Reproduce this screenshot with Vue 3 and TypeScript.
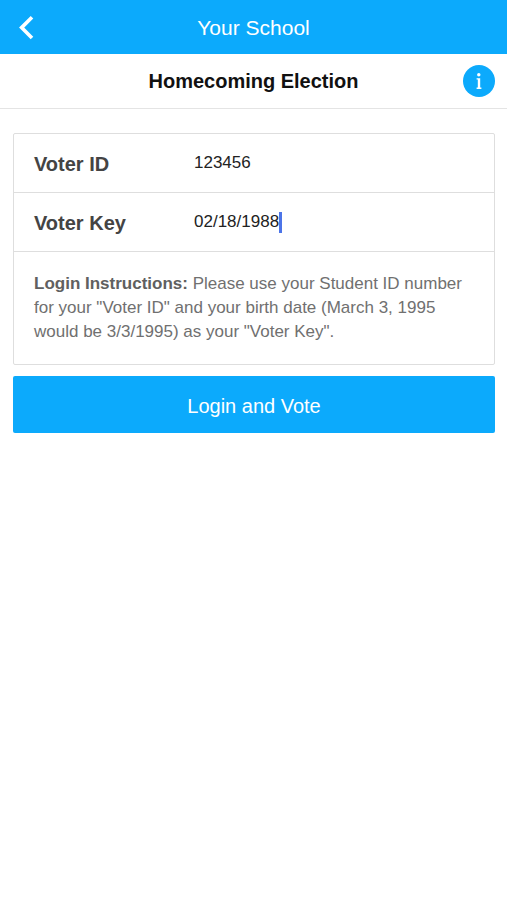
<script setup lang="ts">
import { ref } from 'vue'

const voterId = ref<string>('123456')
const voterKey = ref<string>('02/18/1988')
</script>

<template>
  <div class="page">
    <header class="topbar">
      <button class="back" type="button" aria-label="Back">
        <svg width="16" height="26" viewBox="0 0 16 26" fill="none" aria-hidden="true">
          <path d="M14 2.3 3.6 12.6 14 23" stroke="#fff" stroke-width="3.6" />
        </svg>
      </button>
      <span class="school">Your School</span>
    </header>

    <div class="subbar">
      <h1 class="title">Homecoming Election</h1>
      <button class="info" type="button" aria-label="Information">
        <svg width="32" height="32" viewBox="0 0 32 32" aria-hidden="true">
          <circle cx="16" cy="16" r="16" fill="#0caafc" />
          <circle cx="15.8" cy="9.8" r="1.7" fill="#fff" />
          <path d="M13.6 13.2h3.6v9.4h1.2v1.4h-4.8v-1.4h1.2v-8h-1.2z" fill="#fff" />
        </svg>
      </button>
    </div>

    <form class="form" @submit.prevent>
      <div class="card">
        <div class="row">
          <label class="label" for="voter-id">Voter ID</label>
          <input id="voter-id" v-model="voterId" class="field" type="text" />
        </div>
        <div class="row">
          <label class="label" for="voter-key">Voter Key</label>
          <input id="voter-key" v-model="voterKey" class="field" type="text" />
          <span class="caret" aria-hidden="true"></span>
        </div>
        <p class="help">
          <strong>Login Instructions:</strong> Please use your Student ID number for your "Voter ID"
          and your birth date (March 3, 1995 would be 3/3/1995) as your "Voter Key".
        </p>
      </div>
      <button class="submit" type="submit">Login and Vote</button>
    </form>
  </div>
</template>

<style>
body {
  margin: 0;
  background: #fff;
}
</style>

<style scoped>
.page {
  font-family: 'Liberation Sans', Arial, sans-serif;
  color: #111;
}

button {
  border: 0;
  padding: 0;
  font-family: inherit;
  cursor: pointer;
}

.topbar,
.subbar {
  display: grid;
  grid-template-columns: 48px 1fr 48px;
  align-items: center;
  box-sizing: border-box;
}

.topbar {
  height: 54px;
  padding-top: 2px;
  background: #0caafc;
  color: #fff;
}

.back {
  display: flex;
  padding-left: 18px;
  background: none;
}

.school {
  font-size: 21px;
  line-height: 28px;
  text-align: center;
}

.subbar {
  height: 55px;
  border-bottom: 1px solid #e4e4e4;
}

.title {
  grid-column: 2;
  margin: 0;
  font-size: 20px;
  font-weight: 700;
  line-height: 28px;
  text-align: center;
}

.info {
  display: flex;
  justify-self: start;
  padding-left: 4px;
  background: none;
}

.form {
  display: flex;
  flex-direction: column;
  gap: 11px;
  padding: 24px 12px 24px 13px;
}

.card {
  border: 1px solid #dedede;
  border-radius: 2px;
}

.row {
  display: flex;
  align-items: center;
  height: 58px;
  border-bottom: 1px solid #dedede;
}

.label {
  width: 160px;
  padding: 2px 0 0 20px;
  flex: none;
  font-size: 20px;
  font-weight: 700;
  line-height: 24px;
  color: #444;
}

.field {
  field-sizing: content;
  min-width: 0;
  padding: 0;
  border: 0;
  outline: 0;
  background: none;
  font-family: inherit;
  font-size: 17px;
  line-height: 24px;
  color: #222;
}

.caret {
  width: 3px;
  height: 21px;
  background: #4c74e8;
}

.help {
  margin: 0;
  padding: 20px;
  font-size: 17px;
  line-height: 24px;
  color: #707070;
}

.help strong {
  color: #606060;
}

.submit {
  height: 57px;
  padding-top: 2px;
  border-radius: 2px;
  background: #0caafc;
  color: #fff;
  font-size: 20px;
  line-height: 24px;
}
</style>
